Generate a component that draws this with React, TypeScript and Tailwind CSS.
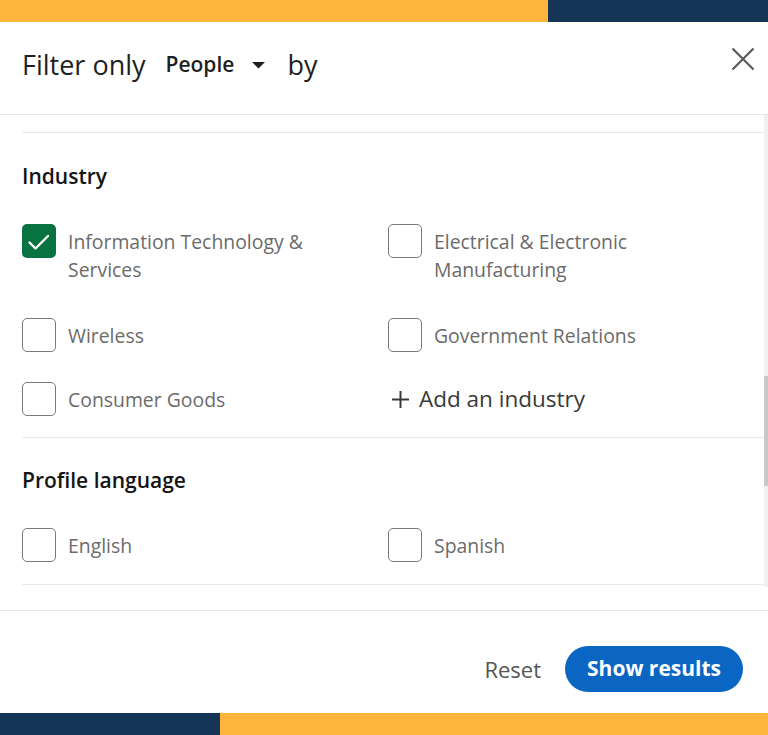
import React from 'react';

type Option = { label: string; checked?: boolean };

const font = { fontFamily: '"Open Sans", "Noto Sans", Arial, sans-serif' };

function Checkbox({ checked }: { checked?: boolean }) {
  if (checked) {
    return (
      <div className="w-[34px] h-[34px] shrink-0 rounded-[5px] bg-[#087340] flex items-center justify-center">
        <svg width="34" height="34" viewBox="0 0 34 34" fill="none">
          <path d="M7.5 18.5 L13.5 24.5 L26 12" stroke="white" strokeWidth="2.4" strokeLinecap="round" strokeLinejoin="round" />
        </svg>
      </div>
    );
  }
  return <div className="w-[34px] h-[34px] shrink-0 rounded-[5px] border-[1.5px] border-[#7a7a7a] bg-white" />;
}

function OptionItem({ option }: { option: Option }) {
  return (
    <label className="flex items-start gap-[12px] cursor-pointer">
      <Checkbox checked={option.checked} />
      <span className="pt-[4px] text-[19.4px] leading-[28px] text-[#6b6b6b]">{option.label}</span>
    </label>
  );
}

export default function App() {
  const industries: Option[] = [
    { label: 'Information Technology & Services', checked: true },
    { label: 'Electrical & Electronic Manufacturing' },
    { label: 'Wireless' },
    { label: 'Government Relations' },
    { label: 'Consumer Goods' },
  ];

  return (
    <div className="w-[768px] h-[735px] flex flex-col bg-white overflow-hidden" style={font}>
      {/* top stripe */}
      <div className="h-[22px] flex shrink-0">
        <div className="flex-1 bg-[#ffb43c]" />
        <div className="w-[220px] bg-[#143556]" />
      </div>

      {/* header */}
      <div className="h-[93px] shrink-0 flex items-center justify-between pl-[22px] pr-[10px] pb-[6px] border-b border-[#e6e6e6]">
        <div className="flex items-center">
          <span className="text-[27px] text-[#1f1f1f]">Filter only</span>
          <button className="ml-[20px] flex items-center gap-[18px] text-[21px] font-semibold text-[#1f1f1f]">
            People
            <svg width="13" height="7" viewBox="0 0 13 7">
              <path d="M0 0 L13 0 L6.5 6.5 Z" fill="#1f1f1f" />
            </svg>
          </button>
          <span className="ml-[22px] text-[27px] text-[#1f1f1f]">by</span>
        </div>
        <button className="w-[30px] h-[30px] flex items-center justify-center mb-[12px]">
          <svg width="24" height="24" viewBox="0 0 24 24" fill="none">
            <path d="M1.5 1.5 L22.5 22.5 M22.5 1.5 L1.5 22.5" stroke="#5a5a5a" strokeWidth="2.2" />
          </svg>
        </button>
      </div>

      {/* scroll area */}
      <div className="h-[472px] shrink-0 flex">
        <div className="flex-1 pl-[22px]">
          <div className="h-[18px] border-b border-[#e8e8e8]" />

          <section className="h-[305px] pt-[29px] border-b border-[#e8e8e8]">
            <h3 className="text-[21px] leading-[28px] font-[550] text-[#141414]">Industry</h3>
            <div className="mt-[34px] grid grid-cols-[366px_1fr] grid-rows-[64px_34px_34px] gap-y-[30px]">
              <div className="w-[300px]"><OptionItem option={industries[0]} /></div>
              <div className="w-[250px]"><OptionItem option={industries[1]} /></div>
              <OptionItem option={industries[2]} />
              <OptionItem option={industries[3]} />
              <OptionItem option={industries[4]} />
              <button className="flex items-center gap-[10px] pl-[4px] text-[22.5px] font-medium text-[#3a3a3a]">
                <svg width="17" height="17" viewBox="0 0 17 17" fill="none">
                  <path d="M8.5 0 V17 M0 8.5 H17" stroke="#3a3a3a" strokeWidth="2" />
                </svg>
                Add an industry
              </button>
            </div>
          </section>

          <section className="h-[147px] pt-[28px] border-b border-[#e8e8e8]">
            <h3 className="text-[21px] leading-[28px] font-[550] text-[#141414]">Profile language</h3>
            <div className="mt-[34px] grid grid-cols-[366px_1fr]">
              <OptionItem option={{ label: 'English' }} />
              <OptionItem option={{ label: 'Spanish' }} />
            </div>
          </section>
        </div>
        <div className="w-[4px] bg-[#f0f0f0] flex flex-col">
          <div className="h-[261px]" />
          <div className="h-[110px] bg-[#c8c8c8]" />
        </div>
      </div>

      <div className="h-[23px] shrink-0" />

      {/* footer */}
      <div className="h-[103px] shrink-0 border-t border-[#e6e6e6] flex items-center justify-end gap-[24px] pr-[25px] pt-[14px]">
        <button className="text-[22px] text-[#555555]">Reset</button>
        <button className="h-[46px] px-[22px] rounded-full bg-[#0a66c2] text-white text-[21px] font-bold">
          Show results
        </button>
      </div>

      {/* bottom stripe */}
      <div className="h-[22px] flex shrink-0">
        <div className="w-[220px] bg-[#143556]" />
        <div className="flex-1 bg-[#ffb43c]" />
      </div>
    </div>
  );
}
